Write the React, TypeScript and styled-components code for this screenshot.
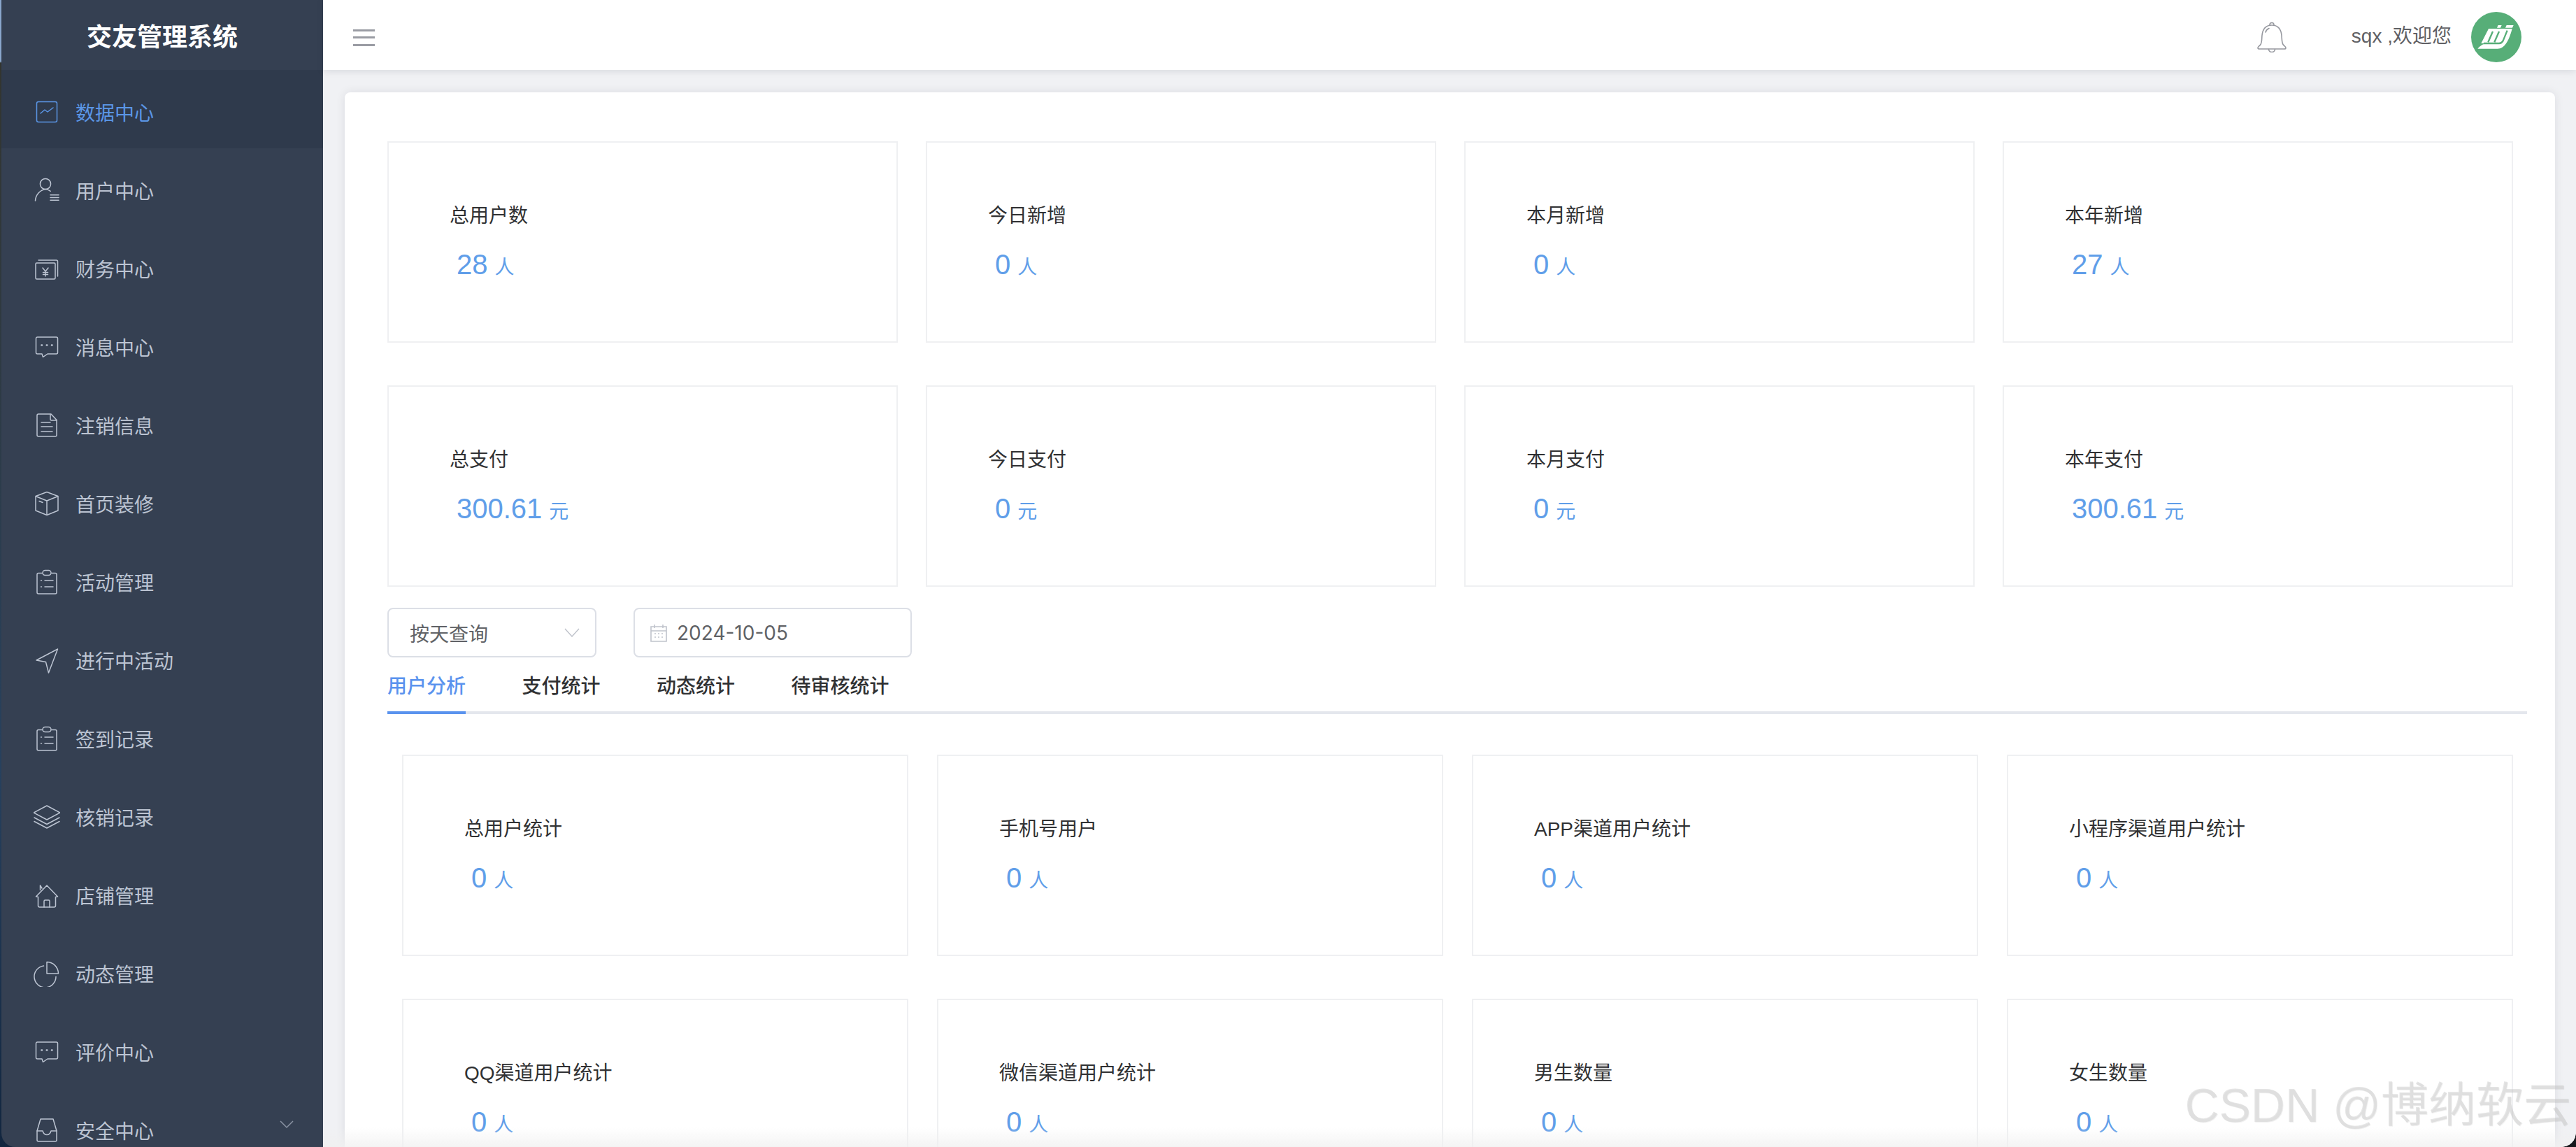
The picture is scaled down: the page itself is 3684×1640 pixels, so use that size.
import React from 'react';
import styled, { createGlobalStyle } from 'styled-components';

const FONT = '"Liberation Sans", "Noto Sans CJK SC", sans-serif';

const GlobalStyle = createGlobalStyle`
  html, body {
    margin: 0;
    padding: 0;
    background: #10141c;
  }
  * {
    box-sizing: border-box;
  }
`;

const Page = styled.div`
  position: relative;
  display: flex;
  width: 3684px;
  height: 1640px;
  overflow: hidden;
  font-family: ${FONT};
  background: linear-gradient(180deg, #8aa6cc 0, #8aa6cc 88px, #33352f 90px, #27415e 1100px, #12263f 100%);
`;

const Sidebar = styled.aside`
  flex: 0 0 460px;
  margin-left: 2px;
  height: 100%;
  display: flex;
  flex-direction: column;
  overflow: hidden;
  background: #354052;
  border-bottom-left-radius: 20px;
`;

const Brand = styled.div`
  flex: 0 0 100px;
  display: flex;
  align-items: center;
  justify-content: center;
  color: #fff;
  font-size: 36px;
  font-weight: 700;
`;

const MenuItem = styled.div<{ $active?: boolean }>`
  position: relative;
  flex: 0 0 112px;
  display: flex;
  align-items: center;
  gap: 22px;
  padding: 7px 0 0 46px;
  font-size: 28px;
  color: ${p => (p.$active ? '#5b96e6' : '#bcc4d2')};
  background: ${p => (p.$active ? '#2f3a4c' : 'transparent')};
`;

const MenuIcon = styled.svg`
  width: 38px;
  height: 38px;
  flex: none;
  fill: none;
  stroke: currentColor;
  stroke-width: 1.5;
  stroke-linecap: round;
  stroke-linejoin: round;
`;

const MenuChevron = styled.svg`
  position: absolute;
  right: 42px;
  top: 46px;
  width: 20px;
  height: 12px;
  fill: none;
  stroke: #8a93a3;
  stroke-width: 1.5;
`;

const Main = styled.div`
  flex: 1;
  min-width: 0;
  display: flex;
  flex-direction: column;
  background: #f0f1f4;
`;

const TopBar = styled.header`
  position: relative;
  flex: 0 0 100px;
  display: flex;
  align-items: center;
  padding: 0 78px 0 43px;
  background: #fff;
  box-shadow: 0 2px 10px rgba(0, 21, 41, 0.1);
`;

const Burger = styled.div`
  width: 31px;
  display: flex;
  flex-direction: column;
  gap: 7.5px;
  margin-top: 7px;

  span {
    height: 3px;
    background: #9a9ca3;
  }
`;

const TopRight = styled.div`
  margin-left: auto;
  display: flex;
  align-items: center;
`;

const BellIcon = styled.svg`
  width: 44px;
  height: 44px;
  margin: 5px 92px 0 0;
  fill: none;
  stroke: #96989f;
  stroke-width: 1.6;
  stroke-linecap: round;
  stroke-linejoin: round;
`;

const Welcome = styled.span`
  font-size: 28px;
  color: #5f6064;
  margin: -3px 28px 0 0;
`;

const Avatar = styled.svg`
  width: 72px;
  height: 72px;
  margin-top: 6px;
  display: block;
`;

const Content = styled.main`
  flex: 1;
  min-height: 0;
  padding: 32px 30px 0 31px;
`;

const Card = styled.section`
  height: 100%;
  padding: 70px 60px 0 61px;
  background: #fff;
  border-radius: 8px 8px 0 0;
  overflow: hidden;
  box-shadow: 0 0 14px rgba(0, 21, 41, 0.09);
`;

const StatGrid = styled.div<{ $inset?: boolean }>`
  display: grid;
  grid-template-columns: repeat(4, 1fr);
  column-gap: ${p => (p.$inset ? '41px' : '40px')};
  row-gap: 61px;
  margin-left: ${p => (p.$inset ? '21px' : '0')};
  margin-top: ${p => (p.$inset ? '58px' : '0')};
`;

const StatCard = styled.div`
  height: 288px;
  padding: 85px 0 0 87px;
  border: 2px solid #eff0f2;
`;

const StatTitle = styled.div`
  font-size: 28px;
  line-height: 40px;
  color: #303133;
`;

const StatValue = styled.div`
  margin: 24px 0 0 10px;
  line-height: 50px;
  font-size: 40px;
  color: #609ee9;
`;

const StatUnit = styled.span`
  margin-left: 10px;
  font-size: 28px;
`;

const Filters = styled.div`
  display: flex;
  gap: 53px;
  margin-top: 30px;
`;

const Field = styled.div<{ $wide?: boolean }>`
  width: ${p => (p.$wide ? '398px' : '299px')};
  height: 71px;
  display: flex;
  align-items: center;
  padding: 0 22px 0 ${p => (p.$wide ? '22px' : '30px')};
  border: 2px solid #dcdfe6;
  border-radius: 8px;
  font-size: 28px;
  color: #606266;
`;

const FieldChevron = styled.svg`
  margin-left: auto;
  width: 22px;
  height: 13px;
  fill: none;
  stroke: #c0c4cc;
  stroke-width: 1.5;
`;

const CalendarIcon = styled.svg`
  width: 24px;
  height: 26px;
  margin-right: 14px;
  fill: none;
  stroke: #c0c4cc;
  stroke-width: 1.6;
`;

const DateText = styled.span`
  font-family: Inter, "Liberation Sans", sans-serif;
  font-size: 28px;
`;

const Tabs = styled.nav`
  display: flex;
  gap: 80.5px;
  height: 81px;
  margin-right: -20px;
  border-bottom: 4px solid #e4e7ed;
`;

const Tab = styled.div<{ $active?: boolean }>`
  position: relative;
  height: 81px;
  padding-bottom: 4px;
  display: flex;
  align-items: center;
  font-size: 28px;
  font-weight: 500;
  color: ${p => (p.$active ? '#5a93ee' : '#303133')};

  &::after {
    content: '';
    display: ${p => (p.$active ? 'block' : 'none')};
    position: absolute;
    left: 0;
    right: 0;
    bottom: 0;
    height: 4px;
    background: #5a93ee;
  }
`;

const BottomFade = styled.div`
  position: absolute;
  left: 462px;
  right: 0;
  bottom: 0;
  height: 28px;
  pointer-events: none;
  background: linear-gradient(180deg, rgba(240, 240, 240, 0), rgba(240, 240, 240, 0.75));
`;

const Corner = styled.div`
  position: absolute;
  right: 0;
  bottom: 0;
  width: 20px;
  height: 20px;
  background: radial-gradient(circle at 0 0, transparent 19.5px, #16181c 20px);
`;

const Watermark = styled.div`
  position: absolute;
  right: 7px;
  bottom: 22px;
  font-size: 68px;
  line-height: 76px;
  white-space: nowrap;
  color: rgba(205, 205, 205, 0.5);
  text-shadow: 1px 1px 0 rgba(0, 0, 0, 0.06);
  pointer-events: none;
`;

const icons: Record<string, React.ReactNode> = {
  chart: (
    <>
      <rect x="4.5" y="4.5" width="29" height="29" rx="2.5" />
      <path d="M10 21l6-5 4 3 8-6" />
    </>
  ),
  user: (
    <>
      <circle cx="17" cy="10" r="7.6" />
      <path d="M2.5 34c.6-8.6 6.600-15 14.500-16.400 2.800.3 5.300 1.400 7.200 2.700" />
      <path d="M24 25.800h12M24 29.500h12M24 33.200h12" />
    </>
  ),
  money: (
    <>
      <rect x="3" y="11" width="28" height="23" rx="1.500" />
      <path d="M7 7h25.500a2 2 0 0 1 2 2v21" />
      <path d="M13 18l4 5 4-5M17 23v7M13.500 24.500h7M13.500 27.500h7" />
    </>
  ),
  message: (
    <>
      <path d="M5.500 5h27a2 2 0 0 1 2 2v20a2 2 0 0 1-2 2H20l-6.500 4.500L12 29H5.500a2 2 0 0 1-2-2V7a2 2 0 0 1 2-2z" />
      <path d="M11.500 16.500h.5M18.800 16.500h.5M26 16.500h.5" strokeWidth="2.600" />
    </>
  ),
  doc: (
    <>
      <path d="M7 3h18l8 8.500v21.500a2 2 0 0 1-2 2H7a2 2 0 0 1-2-2V5a2 2 0 0 1 2-2z" />
      <path d="M24 3.500v7a1.500 1.500 0 0 0 1.500 1.500H33M11 15h13M11 21h16M11 28h16" />
    </>
  ),
  box: (
    <>
      <path d="M19 2.500l16 6v20.500l-16 6.500-16-6.500V8.500z" />
      <path d="M3.500 8.800L19 15l15.500-6.200M19 15v20M8 15.500l5 2" />
    </>
  ),
  clip: (
    <>
      <path d="M12 6.500H7a2 2 0 0 0-2 2V34a2 2 0 0 0 2 2h24a2 2 0 0 0 2-2V8.500a2 2 0 0 0-2-2h-5" />
      <rect x="13" y="2.500" width="12" height="7" rx="3.500" />
      <path d="M10.500 17h1M16 17h12M10.500 26h1M16 26h12" />
    </>
  ),
  send: <path d="M34.500 3L4 19l13.500 2.500 4 15.500z" />,
  layers: (
    <>
      <path d="M19 4L0 14l19 10 19-10z" transform="translate(0 -1)" />
      <path d="M1 20l18 9.500L37 20M1 25.500L19 35l18-9.500" />
    </>
  ),
  home: (
    <>
      <path d="M3.500 21L19 5l15.500 16M3.500 21l3 .5V34a2 2 0 0 0 2 2h21a2 2 0 0 0 2-2V21.500l3-.5" />
      <path d="M9.500 11.500V5M9.500 5l2.500 4M15 36V27.500a1.500 1.500 0 0 1 1.500-1.500h5a1.500 1.500 0 0 1 1.500 1.500V36" />
    </>
  ),
  pie: (
    <>
      <path d="M15.500 7A15.500 15.500 0 1 0 33 22.500" transform="translate(-1 1)" />
      <path d="M19 2.500c9 0 16.500 7.500 16.500 16.500H19z" />
    </>
  ),
  inbox: (
    <>
      <path d="M10 3h18l5 17v13a2 2 0 0 1-2 2H7a2 2 0 0 1-2-2V20z" />
      <path d="M5 20h8c1 3.500 3 5.500 6 5.500s5-2 6-5.500h8" />
    </>
  ),
};

const menu = [
  { label: '数据中心', icon: 'chart', active: true },
  { label: '用户中心', icon: 'user' },
  { label: '财务中心', icon: 'money' },
  { label: '消息中心', icon: 'message' },
  { label: '注销信息', icon: 'doc' },
  { label: '首页装修', icon: 'box' },
  { label: '活动管理', icon: 'clip' },
  { label: '进行中活动', icon: 'send' },
  { label: '签到记录', icon: 'clip' },
  { label: '核销记录', icon: 'layers' },
  { label: '店铺管理', icon: 'home' },
  { label: '动态管理', icon: 'pie' },
  { label: '评价中心', icon: 'message' },
  { label: '安全中心', icon: 'inbox', chevron: true },
];

const topStats = [
  { title: '总用户数', value: '28', unit: '人' },
  { title: '今日新增', value: '0', unit: '人' },
  { title: '本月新增', value: '0', unit: '人' },
  { title: '本年新增', value: '27', unit: '人' },
  { title: '总支付', value: '300.61', unit: '元' },
  { title: '今日支付', value: '0', unit: '元' },
  { title: '本月支付', value: '0', unit: '元' },
  { title: '本年支付', value: '300.61', unit: '元' },
];

const userStats = [
  { title: '总用户统计', value: '0', unit: '人' },
  { title: '手机号用户', value: '0', unit: '人' },
  { title: 'APP渠道用户统计', value: '0', unit: '人' },
  { title: '小程序渠道用户统计', value: '0', unit: '人' },
  { title: 'QQ渠道用户统计', value: '0', unit: '人' },
  { title: '微信渠道用户统计', value: '0', unit: '人' },
  { title: '男生数量', value: '0', unit: '人' },
  { title: '女生数量', value: '0', unit: '人' },
];

const tabs = ['用户分析', '支付统计', '动态统计', '待审核统计'];

type Stat = { title: string; value: string; unit: string };

const StatBox: React.FC<Stat> = ({ title, value, unit }) => (
  <StatCard>
    <StatTitle>{title}</StatTitle>
    <StatValue>
      {value}
      <StatUnit>{unit}</StatUnit>
    </StatValue>
  </StatCard>
);

export default function App() {
  return (
    <Page>
      <GlobalStyle />
      <Sidebar>
        <Brand>交友管理系统</Brand>
        {menu.map(item => (
          <MenuItem key={item.label} $active={item.active}>
            <MenuIcon viewBox="0 0 38 38">{icons[item.icon]}</MenuIcon>
            {item.label}
            {item.chevron && (
              <MenuChevron viewBox="0 0 20 12">
                <path d="M1 1l9 9 9-9" />
              </MenuChevron>
            )}
          </MenuItem>
        ))}
      </Sidebar>
      <Main>
        <TopBar>
          <Burger>
            <span />
            <span />
            <span />
          </Burger>
          <TopRight>
            <BellIcon viewBox="0 0 44 44">
              <path d="M2 37.500c0-2 2.500-2.500 4-5 2-3.500 1.500-8 2-13C9 10 14 5 22 5s13 5 14 14.500c.5 5 0 9.500 2 13 1.500 2.500 4 3 4 5 0 1-.7 1.500-2 1.500H4c-1.300 0-2-.5-2-1.500z" />
              <path d="M19 4.500c0-2 1.300-3 3-3s3 1 3 3M17.500 39.500c.3 2.500 2.200 4 4.500 4s4.200-1.500 4.500-4M13 15c.8-2.500 2.500-4.500 5-5.500" />
            </BellIcon>
            <Welcome>sqx ,欢迎您</Welcome>
            <Avatar viewBox="42 20 216 216">
              <circle cx="150" cy="128" r="108" fill="#57ae78" />
              <path fill="#fff" d="M158 77h15l-5 11h-15zM194 77h30l-5 11h-30z" />
              <path
                fill="#fff"
                d="M117 92h101c-7 28-17 54-32 71-10 11-20 15-36 15H70c12-15 26-22 44-23H85z"
              />
              <path
                fill="none"
                stroke="#57ae78"
                strokeWidth="7"
                d="M135 104l-20 46M162 104l-20 46M96 155h66c8 0 13-4 17-11l18-44"
              />
            </Avatar>
          </TopRight>
        </TopBar>
        <Content>
          <Card>
            <StatGrid>
              {topStats.map(s => (
                <StatBox key={s.title} {...s} />
              ))}
            </StatGrid>
            <Filters>
              <Field>
                按天查询
                <FieldChevron viewBox="0 0 22 13">
                  <path d="M1 1l10 11L21 1" />
                </FieldChevron>
              </Field>
              <Field $wide>
                <CalendarIcon viewBox="0 0 24 26">
                  <path d="M1 4h22v21H1zM1 10h22" />
                  <path d="M6 1v5M18 1v5" />
                  <path d="M6 14h2M11 14h2M16 14h2M6 19h2M11 19h2M16 19h2" />
                </CalendarIcon>
                <DateText>2024-10-05</DateText>
              </Field>
            </Filters>
            <Tabs>
              {tabs.map((t, i) => (
                <Tab key={t} $active={i === 0}>
                  {t}
                </Tab>
              ))}
            </Tabs>
            <StatGrid $inset>
              {userStats.map(s => (
                <StatBox key={s.title} {...s} />
              ))}
            </StatGrid>
          </Card>
        </Content>
      </Main>
      <BottomFade />
      <Corner />
      <Watermark>CSDN @博纳软云</Watermark>
    </Page>
  );
}
